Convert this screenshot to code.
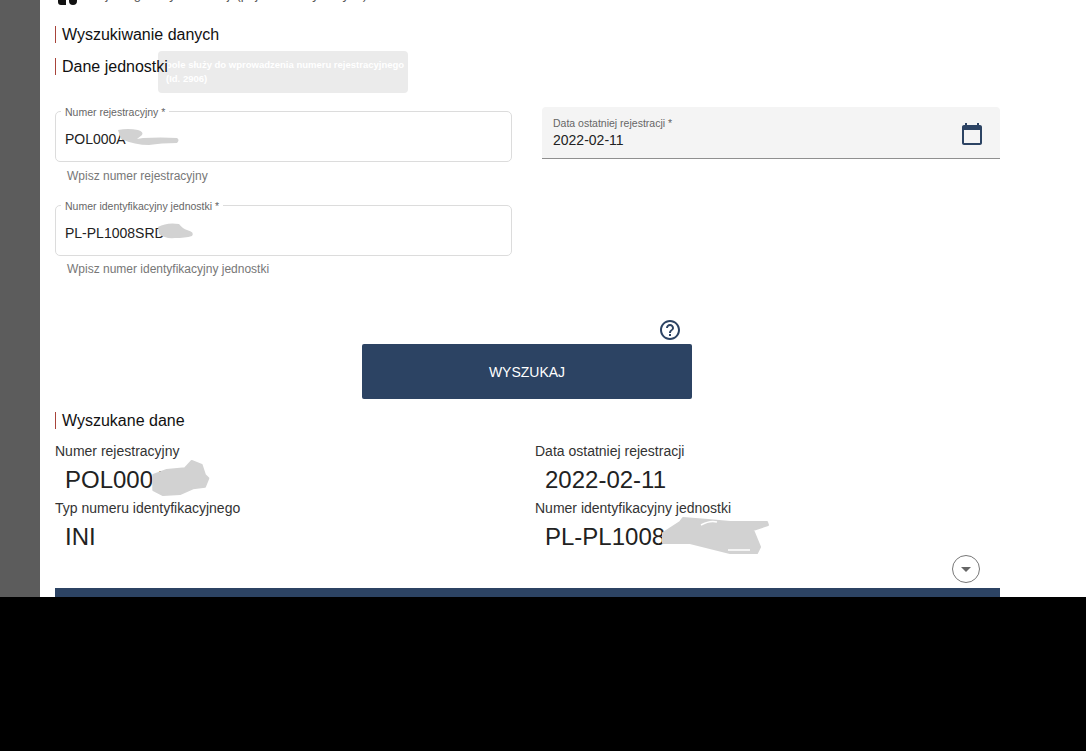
<div class="screen">
  <div class="viewport">
    <aside class="rail"></aside>
    <main class="page">
      <div class="clipped">
        <svg class="clip-icon" viewBox="0 0 20 12" width="20" height="12"><path d="M0 0h8v11H3a3 3 0 0 1-3-3zM11 0h8v7a4 4 0 0 1-8 0z" fill="#111"/></svg>
        <span class="clip-text">Rejestr gminny ewidencji (pojazdów szynowych)</span>
      </div>

      <h2 class="section first">Wyszukiwanie danych</h2>
      <div class="unit-head">
        <h2 class="section over">Dane jednostki</h2>
        <div class="tooltip">pole służy do wprowadzenia numeru rejestracyjnego<br />(Id. 2906)</div>
      </div>

      <div class="form">
        <div class="col">
          <div class="outlined">
            <span class="float">Numer rejestracyjny *</span>
            <span class="val">POL000A</span>
            <svg class="scrib s1" viewBox="0 0 70 24" width="70" height="24"><path d="M5 5 Q15 3 25 5 Q31 7 29 10 L24 14 L30 13 Q48 12 64 13 Q67 15 64 18 Q48 18 36 20 Q22 20 8 14 Z" fill="#d2d2d2"/></svg>
          </div>
          <p class="hint">Wpisz numer rejestracyjny</p>
          <div class="outlined second">
            <span class="float">Numer identyfikacyjny jednostki *</span>
            <span class="val">PL-PL1008SRD</span>
            <svg class="scrib s2" viewBox="0 0 42 20" width="42" height="20"><path d="M3 6 Q12 1 24 3 Q28 8 32 9 Q40 11 37 15 Q30 17 20 17 Q10 18 4 13 Z" fill="#d2d2d2"/></svg>
          </div>
          <p class="hint last">Wpisz numer identyfikacyjny jednostki</p>
        </div>
        <div class="col right">
          <div class="filled">
            <div class="filled-text">
              <span class="filled-label">Data ostatniej rejestracji *</span>
              <span class="filled-val">2022-02-11</span>
            </div>
            <svg class="cal" viewBox="0 0 24 24" width="24" height="24"><path fill="#2c4363" d="M20 3h-1V1h-2v2H7V1H5v2H4c-1.1 0-2 .9-2 2v16c0 1.1.9 2 2 2h16c1.1 0 2-.9 2-2V5c0-1.1-.9-2-2-2zm0 18H4V8h16v13z"/></svg>
          </div>
        </div>
      </div>

      <div class="actions">
        <svg class="help" viewBox="0 0 24 24" width="24" height="24"><path fill="#2c4363" d="M11 18h2v-2h-2v2zm1-16C6.48 2 2 6.48 2 12s4.48 10 10 10 10-4.48 10-10S17.52 2 12 2zm0 18c-4.41 0-8-3.59-8-8s3.59-8 8-8 8 3.59 8 8-3.59 8-8 8zm0-14c-2.21 0-4 1.79-4 4h2c0-1.1.9-2 2-2s2 .9 2 2c0 2-3 1.75-3 5h2c0-2.25 3-2.5 3-5 0-2.21-1.79-4-4-4z"/></svg>
        <button class="search">WYSZUKAJ</button>
      </div>

      <h2 class="section found">Wyszukane dane</h2>
      <div class="results">
        <div class="cell">
          <div class="r-label">Numer rejestracyjny</div>
          <div class="r-val">POL000A
            <svg class="scrib s3" viewBox="0 0 62 38" width="62" height="38"><path d="M3.3 15 L16.7 10 L35 8.3 L41.7 1 L51.7 5 L55 15 L58.3 18.3 L55 26.7 L43 28.3 L30 34 L13 35 L3.3 30 Z" fill="#d2d2d2" stroke="#d2d2d2" stroke-width="2" stroke-linejoin="round"/></svg>
          </div>
        </div>
        <div class="cell">
          <div class="r-label">Data ostatniej rejestracji</div>
          <div class="r-val">2022-02-11</div>
        </div>
        <div class="cell">
          <div class="r-label">Typ numeru identyfikacyjnego</div>
          <div class="r-val">INI</div>
        </div>
        <div class="cell">
          <div class="r-label">Numer identyfikacyjny jednostki</div>
          <div class="r-val">PL-PL1008
            <svg class="scrib s4" viewBox="0 0 112 42" width="112" height="42"><path d="M3 18 L20 7 L23 3 L48 5 L70 7 L107 7 L108 10 L93 15 L100 32 L97 38 L70 38 L50 33 L30 28 L3 28 Z" fill="#d2d2d2" stroke="#d2d2d2" stroke-width="2" stroke-linejoin="round"/><path d="M41 10 Q50 5 57 7 M68 35 L90 35" fill="none" stroke="#fff" stroke-width="1.6"/></svg>
          </div>
        </div>
      </div>

      <div class="toggle-row">
        <span class="toggle"><span class="caret"></span></span>
      </div>
      <div class="band"></div>
    </main>
  </div>
  <div class="blackout"></div>
</div>

<style>
  :global(body) { margin: 0; background: #000; }
  .screen {
    width: 1086px;
    height: 751px;
    display: flex;
    flex-direction: column;
    font-family: "Liberation Sans", Arial, sans-serif;
    overflow: hidden;
  }
  .viewport { height: 597px; display: flex; overflow: hidden; background: #fff; flex: none; }
  .blackout { flex: 1; background: #000; }
  .rail { width: 40px; background: #5c5c5c; flex: none; }
  .page { width: 945px; padding-left: 15px; flex: none; display: flex; flex-direction: column; }

  .clipped { height: 5px; overflow: hidden; display: flex; padding-left: 3px; gap: 11px; flex: none; }
  .clip-icon { margin-top: -6px; flex: none; }
  .clip-text { font-size: 13px; line-height: 14px; margin-top: -12px; color: #555; white-space: nowrap; }

  .section {
    margin: 0;
    font-size: 16px;
    font-weight: 400;
    line-height: 17px;
    color: #111;
    border-left: 1px solid #a8443a;
    padding-left: 6px;
  }
  .over { position: relative; z-index: 1; }
  .first { margin-top: 21px; }
  .unit-head { position: relative; margin-top: 15px; }
  .tooltip {
    position: absolute;
    left: 103px;
    top: -7px;
    width: 250px;
    height: 42px;
    padding: 7px 8px;
    box-sizing: border-box;
    background: #ebebeb;
    border-radius: 4px;
    color: #fff;
    font-size: 9.5px;
    font-weight: 700;
    line-height: 14px;
    white-space: nowrap;
  }

  .form { display: grid; grid-template-columns: 457px 458px; column-gap: 30px; margin-top: 32px; }
  .col { padding-top: 4px; }
  .col.right { padding-top: 0; }
  .outlined {
    position: relative;
    box-sizing: border-box;
    height: 51px;
    border: 1px solid #dcdcdc;
    border-radius: 5px;
    display: flex;
    align-items: center;
    padding: 5px 0 0 9px;
  }
  .outlined.second { margin-top: 22px; }
  .float {
    position: absolute;
    top: -6px;
    left: 5px;
    padding: 0 4px;
    background: #fff;
    font-size: 10.5px;
    line-height: 12px;
    color: #666;
  }
  .val { font-size: 14px; color: #222; }
  .hint { margin: 7px 0 0 12px; font-size: 12px; line-height: 14px; color: #777; }
  .hint.last { margin-top: 6px; }
  .scrib { position: absolute; }
  .s1 { left: 57px; top: 13px; }
  .s2 { left: 99px; top: 15px; }

  .filled {
    box-sizing: border-box;
    height: 52px;
    background: #f4f4f4;
    border-bottom: 1px solid #8f8f8f;
    border-radius: 4px 4px 0 0;
    display: flex;
    justify-content: space-between;
    align-items: center;
    padding: 2px 16px 0 11px;
  }
  .filled-text { display: flex; flex-direction: column; margin-top: -2px; }
  .filled-label { font-size: 10.5px; line-height: 12px; color: #666; margin-top: 1px; }
  .filled-val { font-size: 14px; line-height: 17px; margin-top: 3px; color: #222; }

  .actions { display: flex; flex-direction: column; align-items: center; margin-top: 41px; position: relative; width: 945px; }
  .help { position: absolute; left: 603px; top: 1px; }
  .search {
    margin: 27px 0 0 -1px;
    width: 330px;
    height: 55px;
    background: #2c4363;
    border: 0;
    border-radius: 2px;
    color: #fff;
    font: 400 14px "Liberation Sans", Arial, sans-serif;
  }

  .found { margin-top: 13px; }
  .results { display: grid; grid-template-columns: 480px 465px; margin-top: 10px; }
  .cell { height: 57px; }
  .r-label { font-size: 14px; line-height: 16px; color: #333; margin-top: 4px; }
  .r-val { position: relative; font-size: 24px; line-height: 28px; padding-left: 10px; margin-top: 7px; color: #222; }
  .s3 { left: 95px; top: -6px; }
  .s4 { left: 125px; top: -8px; }

  .toggle-row { display: flex; justify-content: flex-end; height: 29px; margin-top: 2px; padding-right: 20px; flex: none; }
  .toggle {
    box-sizing: border-box;
    width: 28px;
    height: 28px;
    border: 1px solid #777;
    border-radius: 50%;
    display: flex;
    align-items: center;
    justify-content: center;
  }
  .caret { width: 0; height: 0; border-left: 5px solid transparent; border-right: 5px solid transparent; border-top: 5px solid #666; }
  .band { height: 30px; background: #2c4363; margin-top: 4px; flex: none; }
</style>
